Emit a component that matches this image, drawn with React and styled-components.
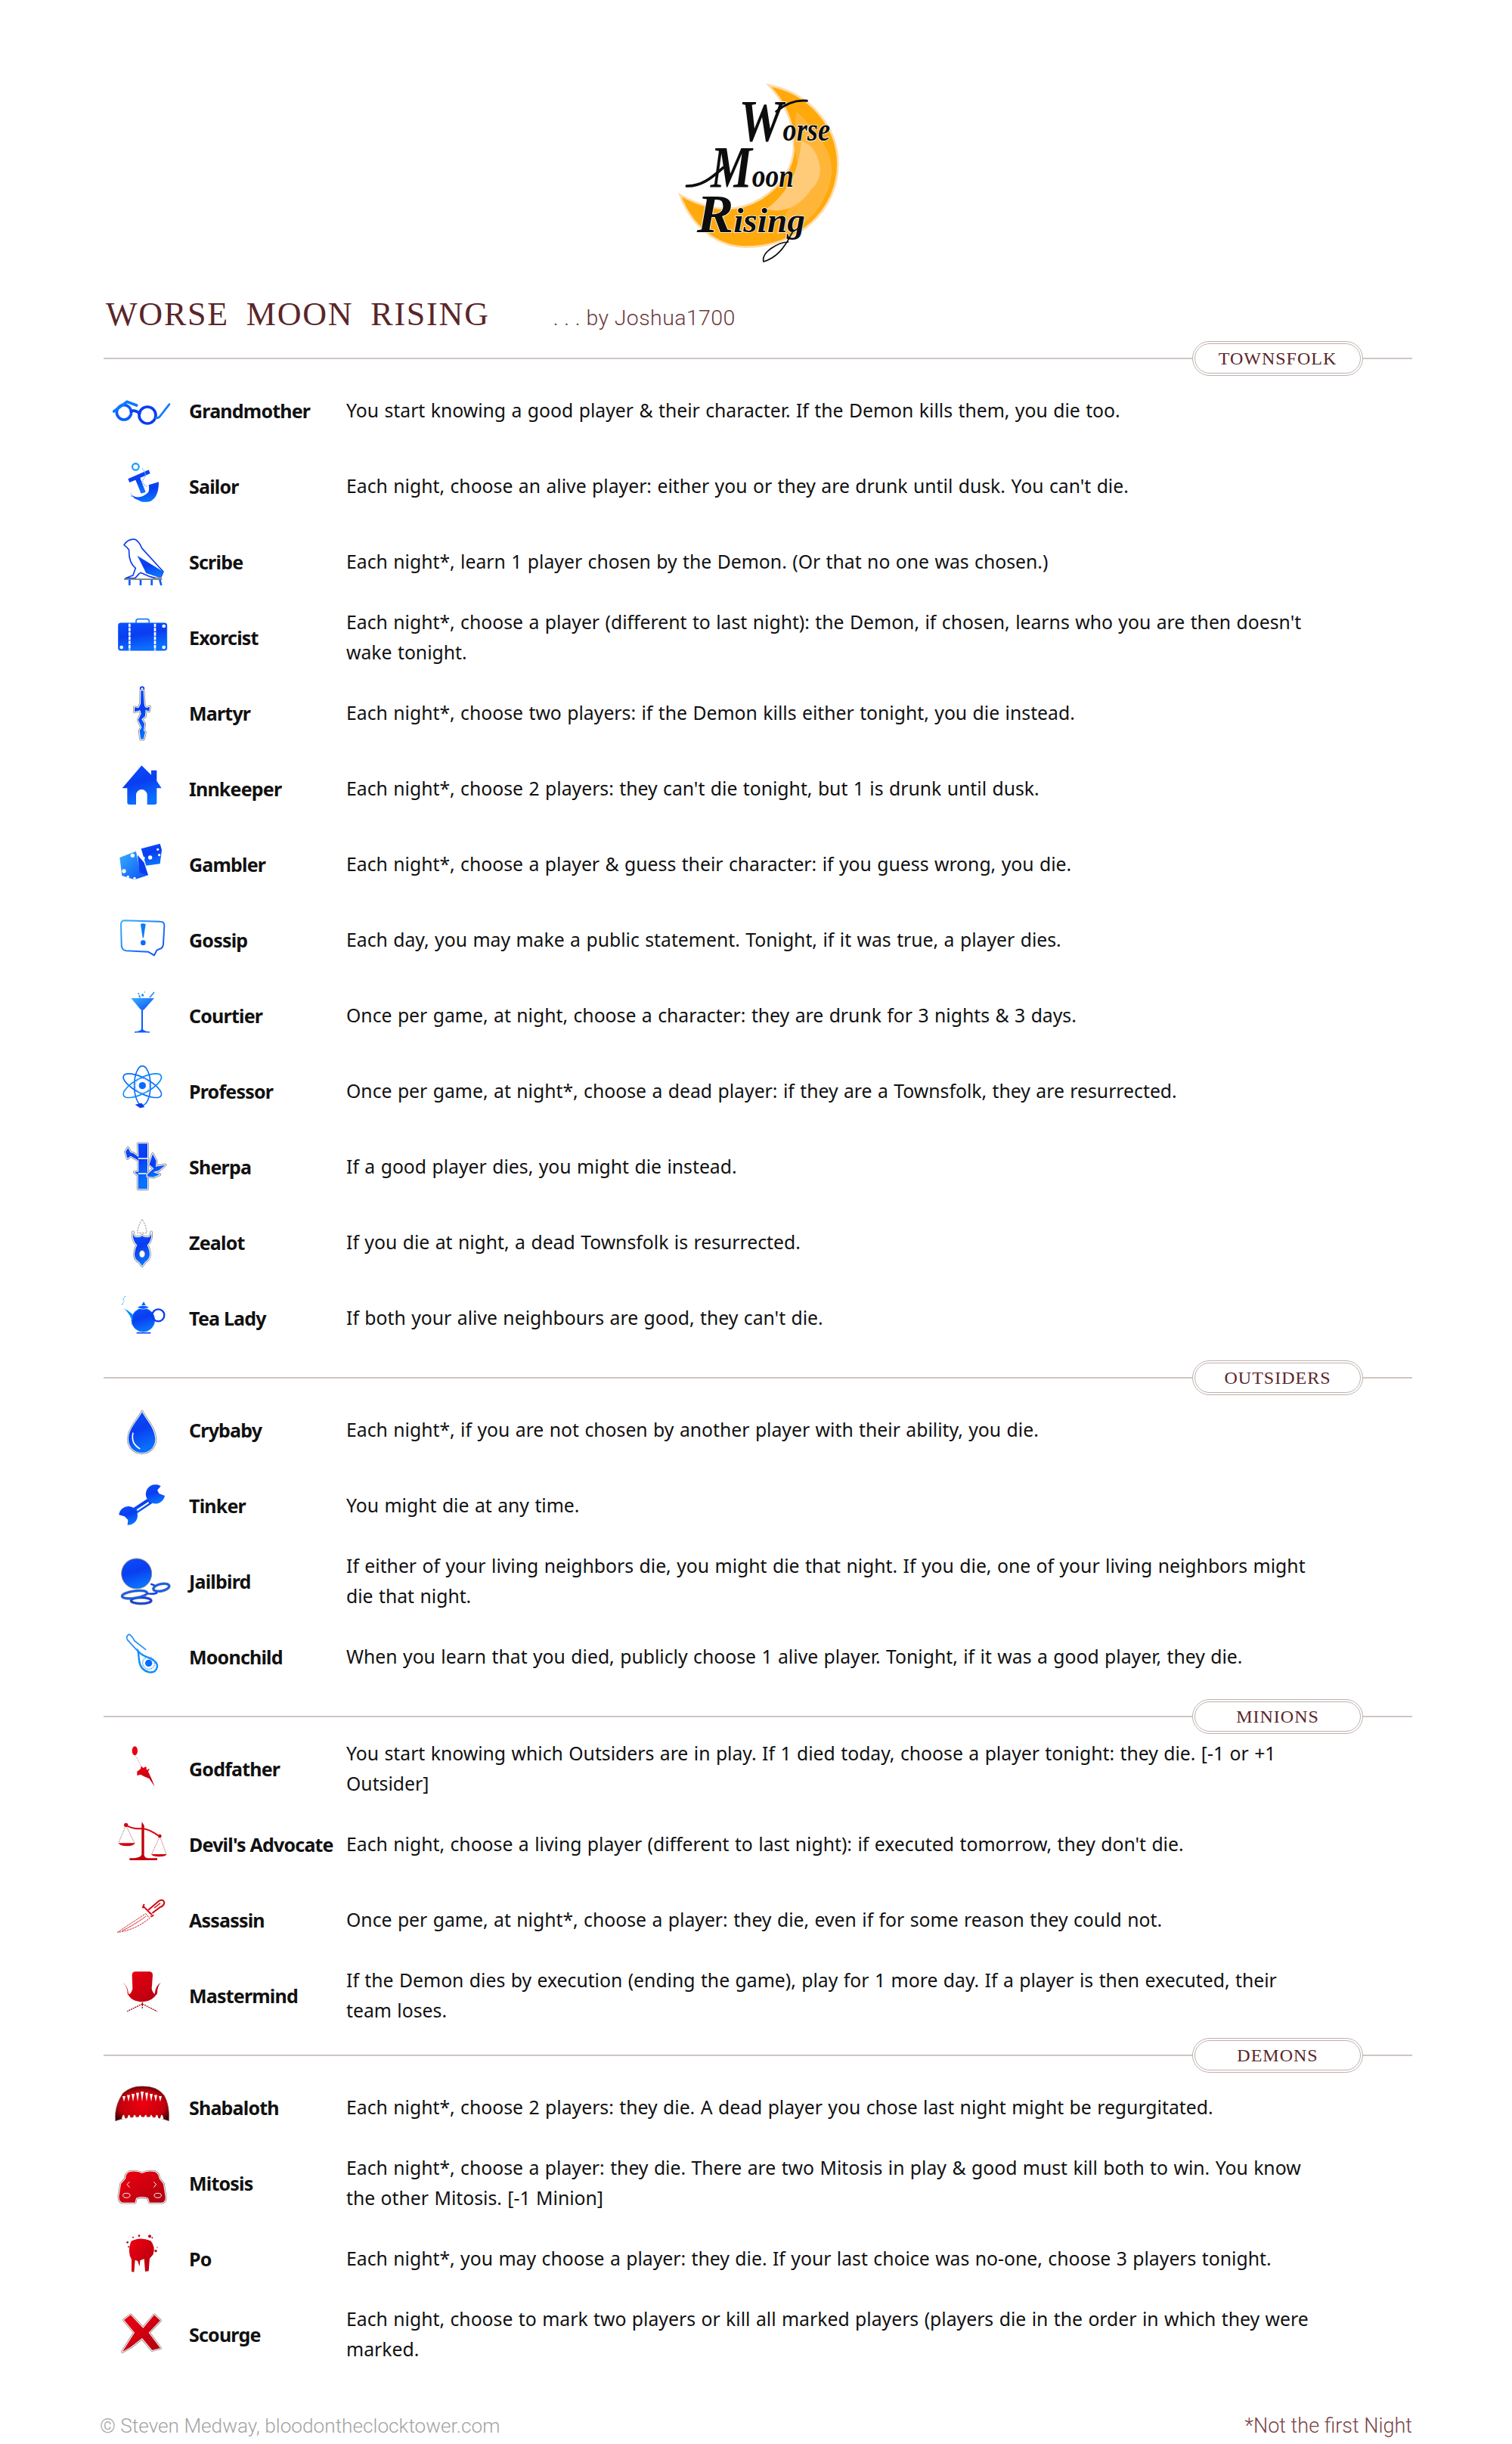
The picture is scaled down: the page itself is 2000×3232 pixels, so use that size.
import React from "react";
import styled, { createGlobalStyle } from "styled-components";

const GlobalStyle = createGlobalStyle`
  html, body {
    margin: 0;
    padding: 0;
    background: #fff;
  }
`;

const Page = styled.div`
  box-sizing: border-box;
  width: 2000px;
  height: 3232px;
  padding: 90px 132px 0 137px;
  font-family: "Noto Sans", sans-serif;
  color: #111;
`;

const Header = styled.header`
  display: flex;
  flex-direction: column;
`;

const Logo = styled.svg`
  display: block;
  width: 320px;
  height: 280px;
  align-self: center;
  margin-left: -5px;
`;

const TitleRow = styled.div`
  box-sizing: border-box;
  display: flex;
  align-items: baseline;
  height: 84px;
  padding: 14px 0 0 3px;
`;

const Title = styled.h1`
  margin: 0;
  font-family: "Liberation Serif", serif;
  font-weight: 400;
  font-size: 44px;
  line-height: 64px;
  letter-spacing: 1.8px;
  word-spacing: 10px;
  color: #5a2629;
`;

const Byline = styled.span`
  margin-left: 84px;
  font-family: Roboto, sans-serif;
  font-weight: 300;
  font-size: 28.5px;
  letter-spacing: 0.4px;
  color: #6b3a3d;
`;

const Section = styled.section`
  margin-bottom: 8px;
`;

const SectionHead = styled.div`
  display: flex;
  align-items: center;
  height: 40px;
`;

const Rule = styled.div`
  flex: ${(p) => (p.$tail ? "0 0 65px" : "1")};
  height: 2px;
  background: #cfc6c2;
`;

const Pill = styled.div`
  box-sizing: border-box;
  flex: 0 0 226px;
  height: 46px;
  display: flex;
  align-items: center;
  justify-content: center;
  border: 4px double #bdb0ac;
  border-radius: 23px;
  font-family: "Liberation Serif", serif;
  font-size: 24px;
  letter-spacing: 1px;
  color: #5a2629;
`;

const Row = styled.div`
  display: grid;
  grid-template-columns: 113px 208px 1fr;
  align-items: center;
  height: 100px;
  padding-right: 123px;
`;

const IconSvg = styled.svg`
  display: block;
  width: 100px;
  height: 100px;
  margin-left: 1px;
  overflow: visible;
`;

const Name = styled.div`
  margin-bottom: 2px;
  font-weight: 700;
  font-size: 25px;
  white-space: nowrap;
  letter-spacing: -0.8px;
`;

const Desc = styled.div`
  margin-bottom: 2px;
  font-size: 24.75px;
  line-height: 40px;
  word-spacing: 1px;
`;

const Footer = styled.footer`
  display: flex;
  justify-content: space-between;
  padding-top: 42px;
  margin-left: -5px;
  font-family: Roboto, sans-serif;
  font-weight: 300;
  font-size: 27px;
  line-height: 40px;
`;

const Copyright = styled.span`
  font-size: 26.2px;
  color: #a3a3a3;
`;

const Note = styled.span`
  color: #7a4347;
`;

const GradientDefs = styled.svg`
  position: absolute;
  width: 0;
  height: 0;
`;

const LogoText = styled.text`
  font-family: "Liberation Serif", serif;
  font-style: italic;
  font-weight: 700;
  fill: #0d0d0d;
  stroke: #fff;
  stroke-width: 5px;
  paint-order: stroke;
`;

// outlined shape used by most of the icons: grey rim, white gap, colour fill
const Halo = ({ d, fill = "url(#blue)" }) => (
  <>
    <path d={d} fill="none" stroke="#8a8a8a" strokeWidth="11" strokeLinejoin="round" />
    <path d={d} fill="none" stroke="#fff" strokeWidth="6" strokeLinejoin="round" />
    <path d={d} fill={fill} />
  </>
);

const Icon = ({ children }) => <IconSvg viewBox="-150 -150 300 300">{children}</IconSvg>;

const Grandmother = () => (
  <Icon>
    <g fill="none" strokeWidth="11" strokeLinecap="round">
      <circle cx="-72" cy="4" r="29" stroke="#0a5cff" />
      <circle cx="21" cy="15" r="33" stroke="#0a3df0" />
      <path d="M-44 0 Q-30 -8 -10 8" stroke="#0a3df0" />
      <path d="M-112 0 L-60 -38 L-22 -24" stroke="#0a7bff" />
      <path d="M54 26 Q66 28 72 18 L108 -28" stroke="#0a7bff" strokeWidth="8" />
    </g>
  </Icon>
);

const Sailor = () => (
  <Icon>
    <circle cx="-26" cy="-80" r="13" fill="none" stroke="#1fa0ff" strokeWidth="7" />
    <path d="M-56 -32 L26 -68 L32 -54 L-8 -36 L14 20 L-4 26 L-26 -28 L-50 -18 Z" fill="url(#blue)" />
    <path d="M-42 20 Q-44 50 -38 34 Q-10 52 24 22 Q30 12 26 -8 L66 -20 Q66 40 34 56 Q12 62 -4 58 L-16 52 L-30 46 L-44 30 Z" fill="url(#blue)" />
    <path d="M0 -74 Q22 -50 6 -34 Q-6 -14 22 0" fill="none" stroke="#7ab8ff" strokeWidth="4" strokeDasharray="5 3" />
  </Icon>
);

const Scribe = () => (
  <Icon>
    <path
      d="M-72 -70 Q-55 -96 -28 -92 Q-14 -86 0 -56 L84 36 L74 58 L64 64 L32 56 L-6 40 L-12 44 L-28 62 L-66 62 L-36 50 L-26 22 Q-54 0 -52 -50 Q-60 -62 -72 -70 Z"
      fill="#fff"
      stroke="#0a3df0"
      strokeWidth="5"
      strokeLinejoin="round"
    />
    <path d="M-20 -28 L84 36 L70 60 L16 42 L-8 -6 Z" fill="url(#blue)" />
    <path d="M-72 66 H76 L74 60 L50 62" fill="none" stroke="#8a8a8a" strokeWidth="6" />
    <path d="M-50 68 V90 M-6 68 V90 M38 68 V90 M70 68 L76 90" stroke="#0a5cff" strokeWidth="8" />
  </Icon>
);

const Exorcist = () => (
  <Icon>
    <path d="M-24 -60 V-68 Q-24 -76 -14 -76 H18 Q28 -76 28 -68 V-60" fill="none" stroke="#1a7cff" strokeWidth="5" />
    <rect x="-94" y="-60" width="192" height="108" rx="8" fill="url(#blue)" stroke="#0a5cff" strokeWidth="3" />
    <path d="M-50 -58 V48 M51 -58 V48" stroke="#fff" strokeWidth="8" strokeDasharray="14 3" />
    <circle cx="-82" cy="36" r="7" fill="#fff" />
    <circle cx="86" cy="36" r="7" fill="#fff" />
    <circle cx="86" cy="-48" r="7" fill="#fff" />
  </Icon>
);

const Martyr = () => (
  <Icon>
    <circle cx="0" cy="-100" r="7" fill="#fff" stroke="#0a3df0" strokeWidth="5" />
    <Halo d="M-5 -92 H5 L8 -42 Q8 -30 16 -24 L30 -28 L28 -10 L14 -16 L12 10 L-2 22 L10 40 L6 66 L12 72 L6 100 L-6 100 L-10 66 L-2 54 L-16 24 L-4 0 L-8 -14 L-30 -8 L-30 -26 L-14 -24 L-6 -40 Z" />
  </Icon>
);

const Innkeeper = () => (
  <Icon>
    <path
      d="M-2 -95 L36 -58 V-76 H58 V-34 L77 -5 H58 V52 Q58 60 50 60 H20 V22 A22 22 0 0 0 -24 22 V60 H-50 Q-59 60 -59 52 V-5 H-79 Z"
      fill="url(#blue)"
    />
  </Icon>
);

const Gambler = () => (
  <Icon>
    <path d="M-4 -65 L71 -85 L78 -60 L71 -5 L16 2 Z" fill="url(#blue)" />
    <path d="M-89 -30 L-24 -55 L-12 -30 L24 40 L-30 58 L-80 42 Z" fill="url(#sky)" />
    <path d="M-24 -55 L-14 -48 L26 36 L-8 28 Z" fill="#fff" />
    <path d="M-18 -40 L-10 30 L24 40 L8 -10 Z" fill="#0a3df0" />
    <g fill="#fff">
      <circle cx="-38" cy="-38" r="8" />
      <circle cx="-72" cy="24" r="8" />
      <circle cx="-56" cy="46" r="5" />
      <circle cx="-30" cy="52" r="5" />
      <circle cx="32" cy="-30" r="8" />
      <circle cx="62" cy="-62" r="5" />
      <circle cx="68" cy="-40" r="5" />
      <circle cx="5" cy="-28" r="6" />
    </g>
  </Icon>
);

const Gossip = () => (
  <Icon>
    <path
      d="M-72 -80 L72 -76 Q88 -76 88 -60 L84 14 Q82 32 66 34 L58 38 L48 58 L24 44 L-64 40 Q-84 36 -82 10 L-84 -64 Q-84 -78 -72 -80 Z"
      fill="none"
      stroke="url(#sky)"
      strokeWidth="6"
      strokeLinejoin="round"
    />
    <path d="M-6 -66 Q4 -70 14 -66 L6 -12 H2 Z" fill="#0a7bff" />
    <circle cx="4" cy="8" r="10" fill="#0a6cff" />
  </Icon>
);

const Courtier = () => (
  <Icon>
    <path d="M-44 -72 H48 L6 -25 H-4 Z" fill="url(#sky)" />
    <path d="M0 -25 V52" stroke="#0a5cff" strokeWidth="6" />
    <path d="M-30 63 Q0 60 0 46 Q0 60 30 63 Z" fill="#0a5cff" stroke="#0a5cff" strokeWidth="3" />
    <path d="M-12 -84 L-8 -74 M30 -74 L48 -96" stroke="#1f8cff" strokeWidth="5" />
    <circle cx="-14" cy="-90" r="3" fill="#1f8cff" />
    <circle cx="2" cy="-84" r="5" fill="#1f8cff" />
    <circle cx="10" cy="-96" r="2" fill="#1f8cff" />
  </Icon>
);

const Professor = () => (
  <Icon>
    <g fill="none" strokeWidth="5">
      <ellipse cx="1" cy="-25" rx="32" ry="78" stroke="#0a6cff" />
      <ellipse cx="1" cy="-25" rx="84" ry="30" transform="rotate(28 1 -25)" stroke="#0a6cff" />
      <ellipse cx="1" cy="-25" rx="84" ry="30" transform="rotate(-28 1 -25)" stroke="#0a8cff" />
      <circle cx="1" cy="-25" r="28" stroke="#a8c8ff" strokeWidth="3" />
    </g>
    <circle cx="1" cy="-25" r="14" fill="#0a6cff" />
    <path d="M-28 50 L-2 44 L10 60 L-8 64 Z" fill="#0a3df0" />
  </Icon>
);

const Sherpa = () => (
  <Icon>
    <Halo d="M-16 -95 H21 V85 H-16 V30 L-30 18 L-14 16 V-28 L-46 -46 L-58 -36 L-66 -62 L-56 -78 L-46 -60 L-34 -56 L-14 -42 Z" />
    <path d="M-16 -36 H21 M-16 24 H21" stroke="#fff" strokeWidth="5" />
    <Halo d="M21 26 L46 4 L28 -12 L42 -54 L56 -26 L54 -4 L92 -10 L66 12 L44 18 L70 28 L44 38 L21 36 Z" />
  </Icon>
);

const Zealot = () => (
  <Icon>
    <path d="M0 -95 Q-18 -66 -18 -40 H18 Q18 -66 0 -95 Z" fill="#fff" stroke="#8a8a8a" strokeWidth="3" strokeDasharray="7 4" />
    <Halo d="M-36 -44 Q-36 -20 -18 -24 Q-4 -22 0 -30 Q4 -22 20 -24 Q36 -20 36 -44 Q40 -10 20 8 Q30 26 30 48 Q26 68 12 74 L0 90 L-12 74 Q-28 66 -30 48 Q-30 26 -20 8 Q-40 -10 -36 -44 Z" />
    <ellipse cx="0" cy="43" rx="11" ry="14" fill="#fff" stroke="#8a8a8a" strokeWidth="2" />
  </Icon>
);

const TeaLady = () => (
  <Icon>
    <circle cx="4" cy="5" r="46" fill="url(#blue)" stroke="#0a7bff" strokeWidth="3" />
    <path d="M-38 -18 L-58 -34 Q-66 -36 -74 -42 Q-58 -30 -50 -14 Q-44 0 -38 8 Z" fill="#0a8cff" />
    <path d="M-66 -90 Q-80 -78 -72 -70 Q-78 -62 -80 -52" fill="none" stroke="#1f9cff" strokeWidth="3" strokeDasharray="7 4" />
    <path d="M-22 -44 Q4 -62 30 -44 L4 -38 Z" fill="#0a5cff" stroke="#fff" strokeWidth="2" />
    <path d="M6 -68 L14 -54 H-2 Z" fill="#0a5cff" />
    <circle cx="64" cy="-14" r="24" fill="none" stroke="#0a3df0" strokeWidth="7" />
    <path d="M-22 56 H34" stroke="#0a3df0" strokeWidth="5" />
  </Icon>
);

const Crybaby = () => (
  <Icon>
    <Halo d="M0 -75 C14 -45 52 -10 52 35 A52 52 0 0 1 -54 35 C-54 -10 -14 -45 0 -75 Z" />
    <path d="M-36 8 Q-46 52 -8 72" fill="none" stroke="#fff" strokeWidth="5" />
  </Icon>
);

const Tinker = () => (
  <Icon>
    <path d="M-40 10 L36 -40 L52 -20 L-26 32 Z" fill="url(#blue)" />
    <path d="M-18 14 L24 -14" stroke="#fff" strokeWidth="6" strokeLinecap="round" />
    <path d="M74 -80 A38 38 0 1 0 90 -42 L68 -50 L60 -64 Z" fill="url(#blue)" />
    <path d="M-92 34 A37 37 0 1 1 -58 74 L-56 54 L-70 40 Z" fill="url(#blue)" />
  </Icon>
);

const Jailbird = () => (
  <Icon>
    <circle cx="-22" cy="-33" r="60" fill="url(#blue)" stroke="#8a8a8a" strokeWidth="3" />
    <g fill="none" stroke="#8a8a8a" strokeWidth="11">
      <ellipse cx="-4" cy="74" rx="40" ry="12" />
      <ellipse cx="-30" cy="50" rx="50" ry="14" transform="rotate(-8 -30 50)" />
      <ellipse cx="76" cy="22" rx="32" ry="14" transform="rotate(-12 76 22)" />
    </g>
    <g fill="none" stroke="#0a3df0" strokeWidth="7">
      <ellipse cx="-4" cy="74" rx="40" ry="12" />
      <ellipse cx="-30" cy="50" rx="50" ry="14" transform="rotate(-8 -30 50)" stroke="#0a5cff" />
      <ellipse cx="76" cy="22" rx="32" ry="14" transform="rotate(-12 76 22)" stroke="#0a5cff" />
      <path d="M34 8 L50 14 M20 46 Q50 50 60 42" />
    </g>
  </Icon>
);

const Moonchild = () => (
  <Icon>
    <path
      d="M-52 -92 Q-66 -84 -58 -70 L-20 -28 L-14 -24 M-52 -92 Q-42 -88 -30 -66 L14 -32"
      fill="none"
      stroke="#1f8cff"
      strokeWidth="5"
      strokeLinecap="round"
    />
    <path d="M-16 -26 Q-6 -12 20 -2 Q62 14 60 36 Q54 62 28 58 Q-8 50 -12 10 Z" fill="#fff" stroke="#0a8cff" strokeWidth="7" />
    <circle cx="26" cy="22" r="14" fill="#0a6cff" />
    <circle cx="26" cy="22" r="24" fill="none" stroke="#4aa0ff" strokeWidth="4" strokeDasharray="5 3" />
  </Icon>
);

const Godfather = () => (
  <Icon>
    <ellipse cx="-29" cy="-74" rx="11" ry="18" fill="#e8000f" />
    <path d="M-26 -55 L-4 -14" stroke="#b8454a" strokeWidth="2" strokeDasharray="3 3" />
    <path
      d="M-20 8 L-6 -2 L-4 -14 L4 -6 L16 -12 L18 2 L30 -4 L24 8 L36 34 L50 68 L28 36 L8 28 L-6 20 L-20 24 Z"
      fill="url(#red)"
    />
  </Icon>
);

const DevilsAdvocate = () => (
  <Icon>
    <g fill="url(#red)" stroke="none">
      <path d="M-1 -92 L8 -78 L8 40 Q10 50 22 52 L60 52 V60 H-50 V52 Q-6 52 -2 38 V-78 Z" fill="#c0000c" />
      <circle cx="-64" cy="-80" r="8" />
      <circle cx="70" cy="-36" r="7" />
      <path d="M-94 -8 H-28 Q-34 4 -60 4 Q-88 4 -94 -8 Z" />
      <path d="M36 36 H98 Q92 46 68 46 Q42 46 36 36 Z" />
    </g>
    <path d="M-62 -78 Q-36 -62 -2 -66 Q24 -66 70 -34" fill="none" stroke="#d8000c" strokeWidth="6" />
    <path d="M-66 -74 L-94 -8 M-62 -74 L-30 -8 M68 -30 L38 36 M72 -30 L96 36" stroke="#90202a" strokeWidth="2" strokeDasharray="4 3" fill="none" />
  </Icon>
);

const Assassin = () => (
  <Icon>
    <g fill="none" stroke="#c0101c" strokeWidth="3">
      <path d="M-98 46 Q-50 14 14 -28 L30 -10 Q-30 38 -98 46 Z" strokeDasharray="8 3" />
      <path d="M-80 40 Q-40 22 16 -18" stroke="#e0303a" />
    </g>
    <path d="M6 -56 L38 -24 M2 -50 L8 -66 M34 -16 L46 -22" stroke="#d8000c" strokeWidth="6" fill="none" />
    <path d="M24 -42 L66 -78 Q84 -88 88 -72 Q86 -58 72 -54 L40 -30" fill="#fff" stroke="#d8000c" strokeWidth="6" />
    <path d="M48 -50 L72 -70" stroke="#d8000c" strokeWidth="4" />
  </Icon>
);

const Mastermind = () => (
  <Icon>
    <path d="M-40 -84 Q-40 -98 -26 -98 H28 Q42 -98 42 -84 L38 -30 Q44 -4 62 -8 Q52 -2 50 -12 Q54 -44 74 -54 Q60 -40 60 -12 Q40 20 4 22 Q-44 22 -58 -12 Q-58 -40 -78 -54 Q-58 -44 -54 -12 Q-50 -2 -62 -8 Q-44 -4 -38 -30 Z" fill="url(#red)" />
    <path d="M1 24 V50 M1 30 L-60 60 M1 30 L60 60" stroke="#a8000c" strokeWidth="4" strokeDasharray="6 3" />
  </Icon>
);

const topTeeth = [-72, -54, -36, -18, 0, 18, 36, 54, 72];
const lowTeeth = [-74, -52, -30, -8, 14, 36, 58, 78];

const Shabaloth = () => (
  <Icon>
    <path d="M-106 44 Q-110 -10 -76 -60 Q-40 -90 2 -87 Q60 -88 88 -50 Q110 -10 106 50 Q60 32 0 34 Q-60 34 -106 50 Z" fill="url(#maw)" stroke="#7a5a5a" strokeWidth="2" />
    <g fill="#fff">
      {topTeeth.map((x) => (
        <path key={x} d={`M${x - 6} ${-66 + Math.abs(x) / 4} H${x + 6} L${x} -26 Z`} />
      ))}
      {lowTeeth.map((x) => (
        <path key={x} d={`M${x - 7} 42 Q${x} 10 ${x + 7} 42 Z`} />
      ))}
    </g>
  </Icon>
);

const Mitosis = () => (
  <Icon>
    <Halo
      d="M-50 -48 Q-20 -52 0 -42 Q20 -52 50 -48 Q66 -40 68 -20 L84 0 L92 50 Q94 72 78 74 L30 74 L24 56 Q0 48 -24 56 L-28 74 L-76 74 Q-92 72 -92 50 L-84 0 L-66 -20 Q-66 -40 -50 -48 Z"
      fill="url(#red)"
    />
    <g fill="none" stroke="#fff" strokeWidth="3">
      <ellipse cx="-62" cy="46" rx="14" ry="9" />
      <ellipse cx="62" cy="46" rx="14" ry="9" />
      <path d="M-50 -8 L-60 2 L-50 14 M46 -8 L56 2 L46 14" />
    </g>
  </Icon>
);

const Po = () => (
  <Icon>
    <path
      d="M-44 -72 Q-10 -92 34 -74 Q54 -50 44 -20 L30 -4 L26 46 L12 48 L8 -2 L-8 4 L-10 28 L-18 6 L-28 2 L-32 50 L-42 48 L-42 0 Q-60 -30 -44 -72 Z"
      fill="url(#red)"
    />
    <g fill="#b4000c">
      <circle cx="-58" cy="-68" r="4" />
      <circle cx="-36" cy="-88" r="3" />
      <circle cx="-12" cy="-94" r="4" />
      <circle cx="30" cy="-92" r="6" />
      <circle cx="54" cy="-34" r="5" />
      <circle cx="60" cy="-48" r="2" />
      <circle cx="-54" cy="-50" r="3" />
      <circle cx="40" cy="-86" r="3" />
    </g>
  </Icon>
);

const Scourge = () => (
  <Icon>
    <Halo d="M-72 -60 L-46 -80 L4 -28 L48 -80 L72 -58 L26 -10 L72 52 L40 60 L0 12 L-46 48 L-78 66 L-30 -10 Z" fill="url(#red)" />
  </Icon>
);

const sections = [
  {
    label: "TOWNSFOLK",
    rows: [
      { name: "Grandmother", Art: Grandmother, text: "You start knowing a good player & their character. If the Demon kills them, you die too." },
      { name: "Sailor", Art: Sailor, text: "Each night, choose an alive player: either you or they are drunk until dusk. You can't die." },
      { name: "Scribe", Art: Scribe, text: "Each night*, learn 1 player chosen by the Demon. (Or that no one was chosen.)" },
      { name: "Exorcist", Art: Exorcist, text: "Each night*, choose a player (different to last night): the Demon, if chosen, learns who you are then doesn't wake tonight." },
      { name: "Martyr", Art: Martyr, text: "Each night*, choose two players: if the Demon kills either tonight, you die instead." },
      { name: "Innkeeper", Art: Innkeeper, text: "Each night*, choose 2 players: they can't die tonight, but 1 is drunk until dusk." },
      { name: "Gambler", Art: Gambler, text: "Each night*, choose a player & guess their character: if you guess wrong, you die." },
      { name: "Gossip", Art: Gossip, text: "Each day, you may make a public statement. Tonight, if it was true, a player dies." },
      { name: "Courtier", Art: Courtier, text: "Once per game, at night, choose a character: they are drunk for 3 nights & 3 days." },
      { name: "Professor", Art: Professor, text: "Once per game, at night*, choose a dead player: if they are a Townsfolk, they are resurrected." },
      { name: "Sherpa", Art: Sherpa, text: "If a good player dies, you might die instead." },
      { name: "Zealot", Art: Zealot, text: "If you die at night, a dead Townsfolk is resurrected." },
      { name: "Tea Lady", Art: TeaLady, text: "If both your alive neighbours are good, they can't die." },
    ],
  },
  {
    label: "OUTSIDERS",
    rows: [
      { name: "Crybaby", Art: Crybaby, text: "Each night*, if you are not chosen by another player with their ability, you die." },
      { name: "Tinker", Art: Tinker, text: "You might die at any time." },
      { name: "Jailbird", Art: Jailbird, text: "If either of your living neighbors die, you might die that night. If you die, one of your living neighbors might die that night." },
      { name: "Moonchild", Art: Moonchild, text: "When you learn that you died, publicly choose 1 alive player. Tonight, if it was a good player, they die." },
    ],
  },
  {
    label: "MINIONS",
    rows: [
      { name: "Godfather", Art: Godfather, text: "You start knowing which Outsiders are in play. If 1 died today, choose a player tonight: they die. [-1 or +1 Outsider]" },
      { name: "Devil's Advocate", Art: DevilsAdvocate, text: "Each night, choose a living player (different to last night): if executed tomorrow, they don't die." },
      { name: "Assassin", Art: Assassin, text: "Once per game, at night*, choose a player: they die, even if for some reason they could not." },
      { name: "Mastermind", Art: Mastermind, text: "If the Demon dies by execution (ending the game), play for 1 more day. If a player is then executed, their team loses." },
    ],
  },
  {
    label: "DEMONS",
    rows: [
      { name: "Shabaloth", Art: Shabaloth, text: "Each night*, choose 2 players: they die. A dead player you chose last night might be regurgitated." },
      { name: "Mitosis", Art: Mitosis, text: "Each night*, choose a player: they die. There are two Mitosis in play & good must kill both to win. You know the other Mitosis. [-1 Minion]" },
      { name: "Po", Art: Po, text: "Each night*, you may choose a player: they die. If your last choice was no-one, choose 3 players tonight." },
      { name: "Scourge", Art: Scourge, text: "Each night, choose to mark two players or kill all marked players (players die in the order in which they were marked." },
    ],
  },
];

function MoonLogo() {
  return (
    <Logo viewBox="0 0 960 840">
      <path
        d="M530 68 C700 100 805 240 805 380 C805 570 640 710 440 710 C320 710 220 620 178 503 C260 550 340 565 400 555 C520 535 630 430 630 310 C630 210 590 130 530 68 Z"
        fill="#ffa90c"
        stroke="#ffdca6"
        strokeWidth="8"
      />
      <path d="M640 170 C700 230 790 320 780 420 C760 560 660 650 560 660 C600 560 680 480 630 310 Z" fill="#ffb638" />
      <path d="M660 290 C720 300 770 420 700 480 C660 540 600 580 520 560 C600 500 650 420 660 290 Z" fill="#ffcb78" />
      <LogoText x="412" y="288" textLength="362" lengthAdjust="spacingAndGlyphs">
        <tspan fontSize="235">W</tspan>
        <tspan fontSize="130">orse</tspan>
      </LogoText>
      <LogoText x="300" y="470" textLength="330" lengthAdjust="spacingAndGlyphs">
        <tspan fontSize="235">M</tspan>
        <tspan fontSize="135">oon</tspan>
      </LogoText>
      <LogoText x="245" y="652" textLength="430" lengthAdjust="spacingAndGlyphs">
        <tspan fontSize="215">R</tspan>
        <tspan fontSize="140">ising</tspan>
      </LogoText>
      <path d="M205 468 C260 470 300 440 350 395" fill="none" stroke="#0d0d0d" strokeWidth="11" strokeLinecap="round" />
      <path d="M625 650 C600 700 570 750 510 768 C500 730 570 690 610 690" fill="none" stroke="#0d0d0d" strokeWidth="5" />
      <path d="M560 172 C600 140 640 125 682 130" fill="none" stroke="#0d0d0d" strokeWidth="9" strokeLinecap="round" />
    </Logo>
  );
}

export default function App() {
  return (
    <Page>
      <GlobalStyle />
      <GradientDefs>
        <defs>
          <linearGradient id="blue" x1="0" y1="0" x2="0.3" y2="1">
            <stop offset="0" stopColor="#0a50ff" />
            <stop offset="0.5" stopColor="#0a3df0" />
            <stop offset="1" stopColor="#0a70ff" />
          </linearGradient>
          <linearGradient id="sky" x1="0" y1="0" x2="1" y2="1">
            <stop offset="0" stopColor="#38b0ff" />
            <stop offset="1" stopColor="#0a4cf5" />
          </linearGradient>
          <linearGradient id="red" x1="0" y1="0" x2="1" y2="1">
            <stop offset="0" stopColor="#ef0010" />
            <stop offset="1" stopColor="#b00010" />
          </linearGradient>
          <radialGradient id="maw" cx="0.5" cy="0.55" r="0.6">
            <stop offset="0" stopColor="#f00010" />
            <stop offset="0.7" stopColor="#c4000c" />
            <stop offset="1" stopColor="#3a0004" />
          </radialGradient>
        </defs>
      </GradientDefs>
      <Header>
        <MoonLogo />
        <TitleRow>
          <Title>WORSE MOON RISING</Title>
          <Byline>. . . by Joshua1700</Byline>
        </TitleRow>
      </Header>
      {sections.map((section) => (
        <Section key={section.label}>
          <SectionHead>
            <Rule />
            <Pill>{section.label}</Pill>
            <Rule $tail />
          </SectionHead>
          {section.rows.map(({ name, Art, text }) => (
            <Row key={name}>
              <Art />
              <Name>{name}</Name>
              <Desc>{text}</Desc>
            </Row>
          ))}
        </Section>
      ))}
      <Footer>
        <Copyright>© Steven Medway, bloodontheclocktower.com</Copyright>
        <Note>*Not the first Night</Note>
      </Footer>
    </Page>
  );
}
